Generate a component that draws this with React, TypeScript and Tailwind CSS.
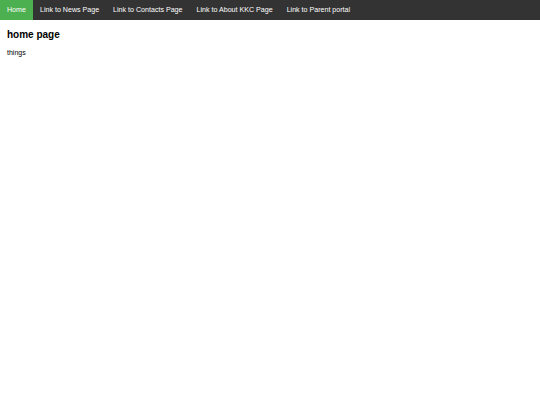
const links = [
  { label: 'Home', active: true },
  { label: 'Link to News Page' },
  { label: 'Link to Contacts Page' },
  { label: 'Link to About KKC Page' },
  { label: 'Link to Parent portal' },
];

export default function App() {
  return (
    <div className="min-h-[405px] bg-white font-['Liberation_Sans',Arial,sans-serif] text-black">
      <ul className="flex h-[20px] bg-[#333333]">
        {links.map((link) => (
          <li key={link.label} className="flex">
            <a
              href="#"
              className={`flex items-center px-[7px] text-[7.1px] leading-normal text-white ${
                link.active ? 'bg-[#4caf50]' : ''
              }`}
            >
              {link.label}
            </a>
          </li>
        ))}
      </ul>
      <div className="px-[7px]">
        <h2 className="mt-[7px] text-[10px] font-bold leading-normal">home page</h2>
        <p className="mt-[6px] text-[7px] leading-normal">things</p>
      </div>
    </div>
  );
}
